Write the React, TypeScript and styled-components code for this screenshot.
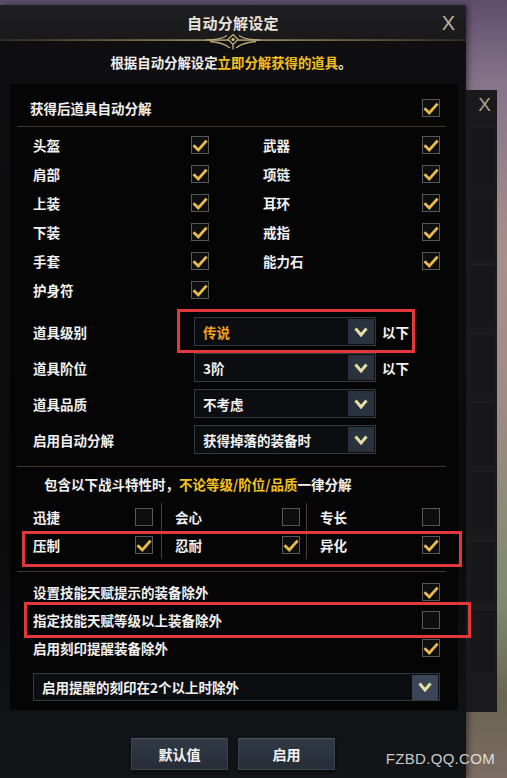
import styled, { createGlobalStyle, css } from 'styled-components';

const GlobalStyle = createGlobalStyle`
  html, body {
    margin: 0;
    padding: 0;
  }
  body {
    background: #0a0a0a;
    font-family: "Noto Sans CJK SC", "Noto Sans", sans-serif;
  }
`;

const equipment: [string, string | null][] = [
  ['头盔', '武器'],
  ['肩部', '项链'],
  ['上装', '耳环'],
  ['下装', '戒指'],
  ['手套', '能力石'],
  ['护身符', null],
];

const selects = [
  { label: '道具级别', value: '传说', legend: true, suffix: '以下', marked: true },
  { label: '道具阶位', value: '3阶', suffix: '以下' },
  { label: '道具品质', value: '不考虑' },
  { label: '启用自动分解', value: '获得掉落的装备时' },
];

const traits: [string, boolean][][] = [
  [['迅捷', false], ['会心', false], ['专长', false]],
  [['压制', true], ['忍耐', true], ['异化', true]],
];

const exclusions = [
  { label: '设置技能天赋提示的装备除外', checked: true },
  { label: '指定技能天赋等级以上装备除外', checked: false, marked: true },
  { label: '启用刻印提醒装备除外', checked: true },
];

function Checkbox({ checked }: { checked: boolean }) {
  return (
    <Box>
      {checked && (
        <svg width="18" height="18" viewBox="0 0 18 18">
          <path d="M2.5 9.2 L7.3 14 L15.6 4.6" fill="none" stroke="#e8bb4a" strokeWidth="2.8" />
        </svg>
      )}
    </Box>
  );
}

function Chevron() {
  return (
    <svg width="14" height="10" viewBox="0 0 14 10">
      <path d="M1.5 1.5 L7 8 L12.5 1.5" fill="none" stroke="#e6dca6" strokeWidth="3" />
    </svg>
  );
}

function Ornament() {
  return (
    <OrnamentSvg width="466" height="16" viewBox="0 0 466 16">
      <defs>
        <linearGradient id="goldLine" x1="0" x2="1" y1="0" y2="0">
          <stop offset="0" stopColor="#3a3324" />
          <stop offset="0.28" stopColor="#8a7a50" />
          <stop offset="0.5" stopColor="#c4b07a" />
          <stop offset="0.72" stopColor="#8a7a50" />
          <stop offset="1" stopColor="#3a3324" />
        </linearGradient>
      </defs>
      <rect x="0" y="5.4" width="466" height="1.4" fill="url(#goldLine)" />
      <g fill="none" stroke="#b9a774" strokeWidth="1.4">
        <path d="M206 6 C215 6 222 5 227 1.5" />
        <path d="M260 6 C251 6 244 5 239 1.5" />
        <path d="M210 7.5 C219 8 225 10 230 14" />
        <path d="M256 7.5 C247 8 241 10 236 14" />
        <path d="M233 0.5 L238 5.5 L233 10.5 L228 5.5 Z" fill="#1a1812" />
        <path d="M233 10.5 L233 15.5" />
      </g>
      <circle cx="233" cy="5.5" r="1.6" fill="#d8c68e" />
    </OrnamentSvg>
  );
}

export default function App() {
  return (
    <Scene>
      <GlobalStyle />
      <Dialog>
        <Header>
          <span />
          <Title>自动分解设定</Title>
          <Close>X</Close>
        </Header>
        <Ornament />
        <Subtitle>
          根据自动分解设定<Gold>立即分解获得的道具</Gold>。
        </Subtitle>

        <Panel>
          <MasterRow>
            <span>获得后道具自动分解</span>
            <Checkbox checked />
          </MasterRow>
          <Rule />

          <EquipGrid>
            {equipment.map(([left, right]) => (
              <Pair key={left}>
                <EquipCell $side="left">
                  <span>{left}</span>
                  <Checkbox checked />
                </EquipCell>
                <EquipCell $side="right">
                  {right && (
                    <>
                      <span>{right}</span>
                      <Checkbox checked />
                    </>
                  )}
                </EquipCell>
              </Pair>
            ))}
          </EquipGrid>

          <SelectList>
            {selects.map((s) => (
              <SelectRow key={s.label}>
                <SelectLabel>{s.label}</SelectLabel>
                <FieldGroup $marked={!!s.marked}>
                  <Select>
                    <SelectValue $legend={!!s.legend}>{s.value}</SelectValue>
                    <ArrowButton>
                      <Chevron />
                    </ArrowButton>
                  </Select>
                  {s.suffix && <Suffix>{s.suffix}</Suffix>}
                </FieldGroup>
              </SelectRow>
            ))}
          </SelectList>
          <Rule $gap={12} />

          <TraitNote>
            包含以下战斗特性时，<Gold>不论等级/阶位/品质</Gold>一律分解
          </TraitNote>
          <TraitGrid>
            {traits.map((row, i) => (
              <TraitRow key={i} $marked={i === 1}>
                {row.map(([name, checked], j) => (
                  <TraitCell key={name} $first={j === 0}>
                    <span>{name}</span>
                    <Checkbox checked={checked} />
                  </TraitCell>
                ))}
              </TraitRow>
            ))}
          </TraitGrid>
          <Rule $gap={12} />

          <OptionList>
            {exclusions.map((o) => (
              <OptionRow key={o.label} $marked={!!o.marked}>
                <span>{o.label}</span>
                <Checkbox checked={o.checked} />
              </OptionRow>
            ))}
          </OptionList>

          <WideSelect>
            <SelectValue>启用提醒的刻印在2个以上时除外</SelectValue>
            <ArrowButton $bright>
              <Chevron />
            </ArrowButton>
          </WideSelect>
        </Panel>

        <Actions>
          <ActionButton>默认值</ActionButton>
          <ActionButton>启用</ActionButton>
        </Actions>
      </Dialog>

      <BackPanel>
        <BackClose>X</BackClose>
        {Array.from({ length: 8 }, (_, i) => (
          <BackSlot key={i} />
        ))}
      </BackPanel>

      <Watermark>FZBD.QQ.COM</Watermark>
    </Scene>
  );
}

const Pair = styled.div`
  display: contents;
`;

const Scene = styled.div`
  position: relative;
  width: 507px;
  height: 778px;
  overflow: hidden;
  display: flex;
  align-items: flex-start;
  background:
    linear-gradient(180deg, #5e4e6c 0px, #85738a 80px, #a89088 260px, #9c8a80 420px, #7e8a70 600px, #6a6452 700px, #7c6c62 778px);
  color: #f2f2f2;
`;

const Dialog = styled.div`
  flex: none;
  width: 466px;
  height: 773px;
  margin-top: 5px;
  display: flex;
  flex-direction: column;
  background: linear-gradient(180deg, #0f0f11 0%, #0b0b0c 70%, #131518 100%);
  box-shadow: 2px 0 6px rgba(0, 0, 0, 0.5);
`;

const Header = styled.div`
  height: 35px;
  display: grid;
  grid-template-columns: 1fr auto 1fr;
  align-items: center;
  background: linear-gradient(180deg, #202022 0%, #19191b 100%);
`;

const Title = styled.div`
  font-size: 15px;
  font-weight: 700;
  color: #e6e2da;
  letter-spacing: 0.3px;
`;

const Close = styled.div`
  justify-self: end;
  padding-right: 11px;
  font-family: "Liberation Sans", "DejaVu Sans", sans-serif;
  font-size: 20px;
  color: #b8b19c;
  line-height: 1;
`;

const OrnamentSvg = styled.svg`
  display: block;
  margin-top: -6px;
`;

const Subtitle = styled.div`
  margin-top: 2px;
  height: 20px;
  line-height: 20px;
  text-align: center;
  font-size: 13.4px;
  font-weight: 700;
  color: #f0f0f0;
  padding-right: 4px;
`;

const Gold = styled.span`
  color: #f2c21e;
`;

const Panel = styled.div`
  margin: 12px 8px 0 10px;
  padding: 10px 12px 9px 7px;
  background: #050505;
  font-size: 13.5px;
  font-weight: 700;
`;

const MasterRow = styled.div`
  height: 28px;
  display: flex;
  align-items: center;
  justify-content: space-between;
  padding: 0 6px 0 13px;
`;

const Rule = styled.div<{ $gap?: number }>`
  height: 1px;
  margin-top: ${(p) => p.$gap ?? 4}px;
  background: #3d3828;
`;

const Box = styled.span`
  flex: none;
  width: 18px;
  height: 18px;
  box-sizing: border-box;
  border: 1.5px solid #585858;
  background: #0e0e0e;
  display: flex;
  align-items: center;
  justify-content: center;
  overflow: visible;

  svg {
    margin: -1.5px;
    overflow: visible;
  }
`;

const EquipGrid = styled.div`
  margin-top: 3px;
  display: grid;
  grid-template-columns: 230px 1fr;
  grid-auto-rows: 29px;
`;

const EquipCell = styled.div<{ $side: 'left' | 'right' }>`
  display: flex;
  align-items: center;
  justify-content: space-between;
  padding: ${(p) => (p.$side === 'left' ? '0 38px 0 16px' : '0 6px 0 16px')};
`;

const marker = css`
  &::after {
    content: '';
    position: absolute;
    border: 3px solid #e2383b;
    pointer-events: none;
  }
`;

const SelectList = styled.div`
  margin-top: 13px;
  display: flex;
  flex-direction: column;
  gap: 7px;
`;

const SelectRow = styled.div`
  height: 29px;
  display: flex;
  align-items: center;
  padding-left: 16px;
`;

const SelectLabel = styled.span`
  width: 161px;
`;

const FieldGroup = styled.div<{ $marked: boolean }>`
  position: relative;
  display: flex;
  align-items: center;
  gap: 6px;
  ${(p) =>
    p.$marked &&
    css`
      ${marker}
      &::after {
        inset: -8px -6px -7px -17px;
      }
    `}
`;

const Select = styled.div`
  width: 182px;
  height: 29px;
  box-sizing: border-box;
  border: 1px solid #353a42;
  background: #0b0d10;
  display: flex;
  align-items: center;
  justify-content: space-between;
  padding: 0 1px 0 8px;
`;

const SelectValue = styled.span<{ $legend?: boolean }>`
  color: ${(p) => (p.$legend ? '#eda126' : '#f2f2f2')};
`;

const ArrowButton = styled.span<{ $bright?: boolean }>`
  width: 26px;
  height: 25px;
  display: flex;
  align-items: center;
  justify-content: center;
  background: ${(p) => (p.$bright ? '#3a4658' : '#2a323e')};
`;

const Suffix = styled.span`
  color: #f4f4f4;
`;

const TraitNote = styled.div`
  margin-top: 8px;
  height: 18px;
  line-height: 18px;
  padding-left: 27px;
`;

const TraitGrid = styled.div`
  margin-top: 10px;
`;

const TraitRow = styled.div<{ $marked: boolean }>`
  position: relative;
  height: 28px;
  display: grid;
  grid-template-columns: 144px 145px 1fr;
  ${(p) =>
    p.$marked &&
    css`
      ${marker}
      &::after {
        inset: 0 -16px -8px 5px;
      }
    `}
`;

const TraitCell = styled.div<{ $first: boolean }>`
  display: flex;
  align-items: center;
  justify-content: space-between;
  padding: ${(p) => (p.$first ? '0 8px 0 16px' : '0 6px 0 13px')};
  border-left: ${(p) => (p.$first ? 'none' : '1px solid #4a4030')};
`;

const OptionList = styled.div`
  margin-top: 6px;
`;

const OptionRow = styled.div<{ $marked: boolean }>`
  position: relative;
  height: 28px;
  display: flex;
  align-items: center;
  justify-content: space-between;
  padding: 0 6px 0 16px;
  ${(p) =>
    p.$marked &&
    css`
      ${marker}
      &::after {
        inset: -4px -25px -4px 7px;
      }
    `}
`;

const WideSelect = styled(Select)`
  width: auto;
  height: 28px;
  margin: 11px 6px 0 16px;
`;

const Actions = styled.div`
  margin-top: 28px;
  display: flex;
  justify-content: center;
  gap: 10px;
`;

const ActionButton = styled.button`
  width: 97px;
  height: 32px;
  border: 1px solid #3a4350;
  border-top-color: #4a5360;
  background: linear-gradient(180deg, #323a46 0%, #262d37 100%);
  color: #f4f4f4;
  font-family: "Noto Sans CJK SC", "Noto Sans", sans-serif;
  font-size: 14px;
  font-weight: 700;
  box-shadow: 0 2px 3px rgba(0, 0, 0, 0.6);
`;

const BackPanel = styled.div`
  flex: none;
  width: 31px;
  height: 622px;
  margin-top: 90px;
  display: flex;
  flex-direction: column;
  align-items: center;
  gap: 6px;
  background: #1a1a1c;
`;

const BackClose = styled.div`
  height: 30px;
  line-height: 30px;
  padding-left: 6px;
  font-family: "Liberation Sans", "DejaVu Sans", sans-serif;
  font-size: 19px;
  color: #a9a28e;
`;

const BackSlot = styled.div`
  width: 24px;
  height: 62px;
  margin-left: 2px;
  background: #18181a;
  border-top: 1px solid #202022;
`;

const Watermark = styled.div`
  position: absolute;
  right: 12px;
  bottom: 11px;
  font-family: "Liberation Sans", "DejaVu Sans", sans-serif;
  font-size: 15px;
  letter-spacing: 0.3px;
  color: rgba(255, 255, 255, 0.78);
`;
